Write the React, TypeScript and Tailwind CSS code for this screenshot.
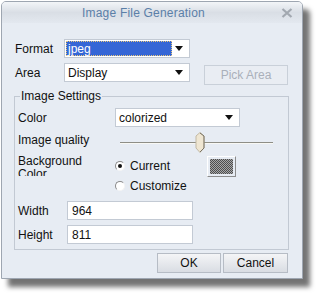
import type { ReactNode } from "react";

const font = { fontFamily: '"Liberation Sans", Arial, sans-serif' };

function Arrow() {
  return (
    <svg width="8" height="5" viewBox="0 0 8 5" className="shrink-0">
      <path d="M0 0h8L4 5z" fill="#111" />
    </svg>
  );
}

function Select({
  value,
  width,
  selected = false,
}: {
  value: string;
  width: string;
  selected?: boolean;
}) {
  return (
    <div
      className={`flex h-[19px] items-center border border-[#c3cad4] bg-white pl-[1px] pr-[6px] ${width}`}
    >
      {selected ? (
        <span className="flex h-[15px] w-[106px] items-center border border-dotted border-[#e9c87a] bg-[#3566d6] pl-[1px] text-white">
          {value}
        </span>
      ) : (
        <span className="flex-1 pl-[2px] text-[#111]">{value}</span>
      )}
      <span className="flex-1" />
      <Arrow />
    </div>
  );
}

function Input({ value }: { value: string }) {
  return (
    <div className="flex h-[19px] w-[126px] items-center border border-[#c3cad4] bg-white pl-[4px] text-[#111]">
      {value}
    </div>
  );
}

function Radio({ checked, children }: { checked?: boolean; children: ReactNode }) {
  return (
    <div className="flex items-center gap-[5px]">
      <span className="flex h-[10px] w-[10px] items-center justify-center rounded-full border border-b-[#f4f4f4] border-l-[#8a8a8a] border-r-[#f4f4f4] border-t-[#8a8a8a] bg-white">
        {checked ? <span className="h-[4px] w-[4px] rounded-full bg-[#111]" /> : null}
      </span>
      <span className="text-[#111]">{children}</span>
    </div>
  );
}

function Button({ children, width, disabled = false }: { children: ReactNode; width: string; disabled?: boolean }) {
  return (
    <div
      className={`flex h-[20px] items-center justify-center border ${width} ${
        disabled
          ? "border-[#c9d0d9] bg-[#e9edf3] text-[#a9b0ba]"
          : "border-[#b6bcc5] bg-gradient-to-b from-[#f4f5f7] to-[#d9dde3] text-[#111]"
      }`}
    >
      {children}
    </div>
  );
}

export default function App() {
  return (
    <div className="h-[299px] w-[324px] overflow-hidden bg-white pl-[1px] pt-[1px] text-[12px]" style={font}>
      <div className="flex h-[278px] w-[302px] flex-col rounded-t-[5px] border border-[#9ea6b1] bg-[#e7ecf3] shadow-[7px_8px_5px_rgba(0,0,0,0.55)]">
        <div className="flex h-[21px] items-center rounded-t-[4px] bg-gradient-to-b from-[#f3f5f8] via-[#d9dee5] to-[#e3e8ef]">
          <span className="ml-[80px] tracking-[0.2px] text-[#5b7fa8]">Image File Generation</span>
          <span className="flex-1" />
          <svg width="12" height="10" viewBox="0 0 12 10" className="mr-[9px]">
            <path d="M1.5 1l9 8M10.5 1l-9 8" stroke="#a2a8b0" strokeWidth="2.2" />
          </svg>
        </div>

        <div className="mt-[16px] flex items-center pl-[13px]">
          <span className="w-[49px] text-[#111]">Format</span>
          <Select value="jpeg" width="w-[126px]" selected />
        </div>

        <div className="mt-[5px] flex items-start pl-[13px]">
          <span className="mt-[1px] w-[49px] text-[#111]">Area</span>
          <Select value="Display" width="w-[126px]" />
          <div className="ml-[14px] mt-[2px]">
            <Button width="w-[84px]" disabled>
              Pick Area
            </Button>
          </div>
        </div>

        <div className="relative ml-[12px] mt-[11px] w-[275px] border border-[#c2c9d3] pb-[5px] pl-[3px]">
          <span className="absolute -top-[8px] left-[5px] bg-[#e7ecf3] px-[1px] leading-[14px] text-[#111]">
            Image Settings
          </span>

          <div className="mt-[11px] flex items-center">
            <span className="w-[97px] text-[#111]">Color</span>
            <Select value="colorized" width="w-[125px]" />
          </div>

          <div className="mt-[5px] flex h-[20px] items-center">
            <span className="-mt-[4px] w-[102px] text-[#111]">Image quality</span>
            <div className="relative h-[20px] w-[153px]">
              <div className="mt-[10px] h-[1px] bg-[#8e8e86]" />
              <div className="h-[1px] bg-[#f8f8f4]" />
              <svg width="10" height="21" viewBox="0 0 10 21" className="absolute left-[75px] top-0">
                <path d="M1 4 L5 0.5 L9 4 V16 L5 20.5 L1 16 Z" fill="#efe6d2" stroke="#c2b9a4" />
                <path d="M5 1 L9 4 V16 L5 20" fill="none" stroke="#7a7466" />
              </svg>
            </div>
          </div>

          <div className="mt-[3px] flex items-start">
            <span className="h-[21px] w-[97px] overflow-hidden leading-[13px] text-[#111]">
              Background
              <br />
              Color
            </span>
            <div className="flex flex-col">
              <div className="flex h-[22px] items-center">
                <div className="w-[92px]">
                  <Radio checked>Current</Radio>
                </div>
                <span className="h-[21px] w-[29px] border border-b-[#8c8c8c] border-l-[#ffffff] border-r-[#8c8c8c] border-t-[#ffffff] p-[2px]">
                  <span className="block h-full w-full bg-[repeating-conic-gradient(#4e4e4e_0_25%,#a8a8a8_0_50%)] bg-[length:2px_2px]" />
                </span>
              </div>
              <div className="flex h-[18px] items-center">
                <Radio>Customize</Radio>
              </div>
            </div>
          </div>

          <div className="mt-[6px] flex items-center">
            <span className="w-[49px] text-[#111]">Width</span>
            <Input value="964" />
          </div>

          <div className="mt-[5px] flex items-center">
            <span className="w-[49px] text-[#111]">Height</span>
            <Input value="811" />
          </div>
        </div>

        <div className="mt-[3px] flex justify-end gap-[2px] pr-[14px]">
          <Button width="w-[64px]">OK</Button>
          <Button width="w-[65px]">Cancel</Button>
        </div>
      </div>
    </div>
  );
}
